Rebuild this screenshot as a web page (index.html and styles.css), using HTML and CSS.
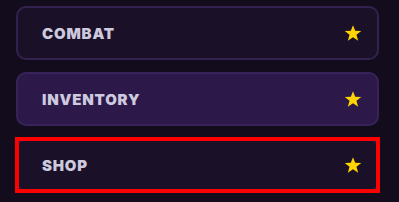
FILE: index.html
```html
<!DOCTYPE html>
<html>
<head>
<meta charset="utf-8">
<link rel="stylesheet" href="styles.css">
</head>
<body>
<div class="menu">
  <div class="item">
    <span class="label">COMBAT</span>
    <svg class="star" viewBox="0 0 24 24"><path d="M12 1.5l2.9 7.6 8.1.3-6.4 5 2.3 7.8L12 17.7l-6.9 4.5 2.3-7.8-6.4-5 8.1-.3z"/></svg>
  </div>
  <div class="item active">
    <span class="label">INVENTORY</span>
    <svg class="star" viewBox="0 0 24 24"><path d="M12 1.5l2.9 7.6 8.1.3-6.4 5 2.3 7.8L12 17.7l-6.9 4.5 2.3-7.8-6.4-5 8.1-.3z"/></svg>
  </div>
  <div class="item focused">
    <span class="label">SHOP</span>
    <svg class="star" viewBox="0 0 24 24"><path d="M12 1.5l2.9 7.6 8.1.3-6.4 5 2.3 7.8L12 17.7l-6.9 4.5 2.3-7.8-6.4-5 8.1-.3z"/></svg>
  </div>
</div>
</body>
</html>
```
FILE: styles.css
```css
html, body {
  margin: 0;
  padding: 0;
  background: #130c1c;
}
body {
  width: 399px;
  height: 202px;
  overflow: hidden;
}
.menu {
  display: flex;
  flex-direction: column;
  gap: 12px;
  padding: 6px 0 0 16px;
  width: 363px;
}
.item {
  position: relative;
  box-sizing: border-box;
  height: 54px;
  border: 2px solid #33224f;
  border-radius: 10px;
  background: #1a1128;
  display: flex;
  align-items: center;
  justify-content: space-between;
  padding: 0 15px 0 24px;
}
.item.active {
  background: #2c1849;
  border-color: #37235a;
}
.item.focused {
  border-color: #2a1d45;
}
.item.focused::after {
  content: "";
  position: absolute;
  left: -3px;
  top: -3px;
  right: -3px;
  bottom: -3px;
  border: 4px solid #ff0000;
}
.label {
  font-family: Inter, "Noto Sans", sans-serif;
  font-weight: 900;
  font-size: 15px;
  letter-spacing: 0.8px;
  color: #cdc9df;
}
.star {
  width: 18px;
  height: 18px;
  fill: #ffd400;
}
```
